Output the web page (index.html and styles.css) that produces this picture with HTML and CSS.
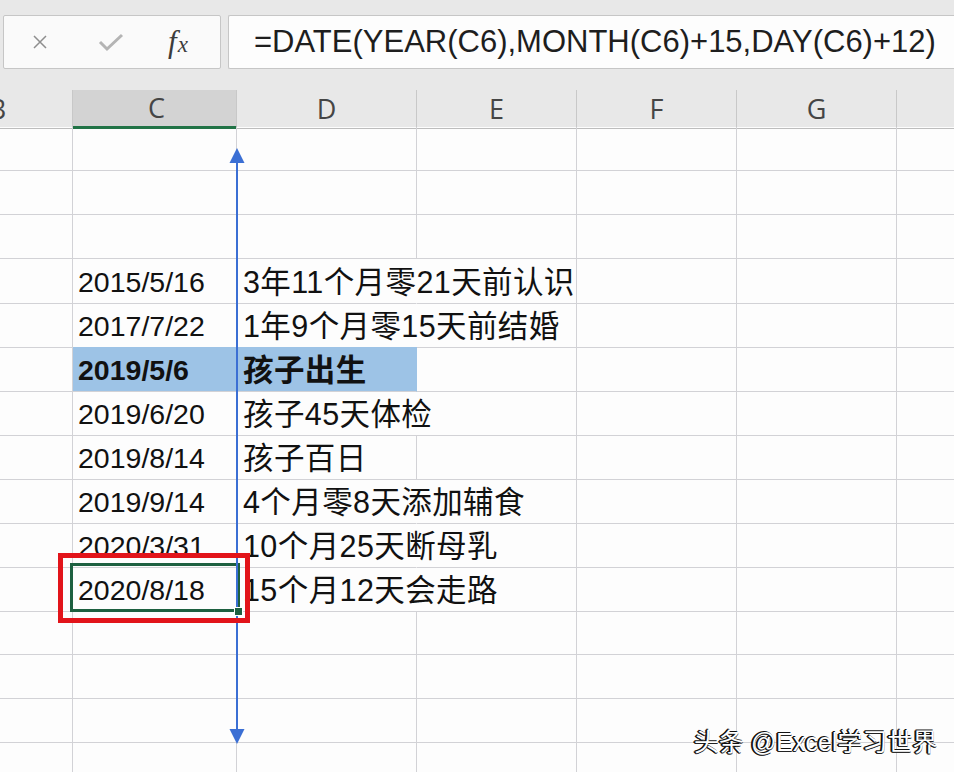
FILE: index.html
```html
<!DOCTYPE html>
<html>
<head>
  <meta charset="utf-8">
  <link rel="stylesheet" href="styles.css">
</head>
<body>
  <div class="toolbar">
    <div class="fx-buttons">
      <svg class="ico" width="16" height="16" viewBox="0 0 16 16"><path d="M2 2L14 14M14 2L2 14" stroke="#8e8e8e" stroke-width="1.5" fill="none"/></svg>
      <svg class="ico" width="26" height="20" viewBox="0 0 26 20"><path d="M2 10L9 17L24 3" stroke="#b4b4b4" stroke-width="3" fill="none"/></svg>
      <span class="fx">f<small>x</small></span>
    </div>
    <div class="formula">=DATE(YEAR(C6),MONTH(C6)+15,DAY(C6)+12)</div>
  </div>

  <div class="sheet">
    <div class="row head">
      <div class="cell">B</div>
      <div class="cell sel">C</div>
      <div class="cell">D</div>
      <div class="cell">E</div>
      <div class="cell">F</div>
      <div class="cell">G</div>
      <div class="cell"></div>
    </div>

    <div class="row"><div class="cell"></div><div class="cell"></div><div class="cell"></div><div class="cell"></div><div class="cell"></div><div class="cell"></div><div class="cell"></div></div>
    <div class="row"><div class="cell"></div><div class="cell"></div><div class="cell"></div><div class="cell"></div><div class="cell"></div><div class="cell"></div><div class="cell"></div></div>
    <div class="row"><div class="cell"></div><div class="cell"></div><div class="cell"></div><div class="cell"></div><div class="cell"></div><div class="cell"></div><div class="cell"></div></div>

    <div class="row"><div class="cell"></div><div class="cell date">2015/5/16</div><div class="cell note spill">3年11个月零21天前认识</div><div class="cell"></div><div class="cell"></div><div class="cell"></div><div class="cell"></div></div>
    <div class="row"><div class="cell"></div><div class="cell date">2017/7/22</div><div class="cell note spill">1年9个月零15天前结婚</div><div class="cell"></div><div class="cell"></div><div class="cell"></div><div class="cell"></div></div>
    <div class="row"><div class="cell"></div><div class="cell date hl">2019/5/6</div><div class="cell note hl">孩子出生</div><div class="cell"></div><div class="cell"></div><div class="cell"></div><div class="cell"></div></div>
    <div class="row"><div class="cell"></div><div class="cell date">2019/6/20</div><div class="cell note spill">孩子45天体检</div><div class="cell"></div><div class="cell"></div><div class="cell"></div><div class="cell"></div></div>
    <div class="row"><div class="cell"></div><div class="cell date">2019/8/14</div><div class="cell note">孩子百日</div><div class="cell"></div><div class="cell"></div><div class="cell"></div><div class="cell"></div></div>
    <div class="row"><div class="cell"></div><div class="cell date">2019/9/14</div><div class="cell note spill">4个月零8天添加辅食</div><div class="cell"></div><div class="cell"></div><div class="cell"></div><div class="cell"></div></div>
    <div class="row"><div class="cell"></div><div class="cell date">2020/3/31</div><div class="cell note spill">10个月25天断母乳</div><div class="cell"></div><div class="cell"></div><div class="cell"></div><div class="cell"></div></div>
    <div class="row"><div class="cell"></div><div class="cell date active">2020/8/18</div><div class="cell note spill">15个月12天会走路</div><div class="cell"></div><div class="cell"></div><div class="cell"></div><div class="cell"></div></div>

    <div class="row"><div class="cell"></div><div class="cell"></div><div class="cell"></div><div class="cell"></div><div class="cell"></div><div class="cell"></div><div class="cell"></div></div>
    <div class="row"><div class="cell"></div><div class="cell"></div><div class="cell"></div><div class="cell"></div><div class="cell"></div><div class="cell"></div><div class="cell"></div></div>
    <div class="row"><div class="cell"></div><div class="cell"></div><div class="cell"></div><div class="cell"></div><div class="cell"></div><div class="cell"></div><div class="cell"></div></div>
    <div class="row"><div class="cell"></div><div class="cell"></div><div class="cell"></div><div class="cell"></div><div class="cell"></div><div class="cell"></div><div class="cell"></div></div>

    <!-- annotations drawn over the grid -->
    <svg class="arrow" width="16" height="600" viewBox="0 0 16 600">
      <line x1="8" y1="16" x2="8" y2="584" stroke="#3b6fd4" stroke-width="2"/>
      <polygon points="8,2 15.5,17 0.5,17" fill="#3b6fd4"/>
      <polygon points="0.5,583 15.5,583 8,598" fill="#3b6fd4"/>
    </svg>
    <div class="redbox"></div>
    <div class="watermark">头条 @Excel学习世界</div>
  </div>
</body>
</html>
```

FILE: styles.css
```css
body {
  margin: 0;
  background: #fdfdfd;
  font-family: "Liberation Sans", "Noto Sans CJK SC", sans-serif;
  overflow: hidden;
}

.toolbar {
  height: 90px;
  background: #e8e8e8;
  display: flex;
  align-items: flex-start;
  padding: 15px 0 0 3px;
  box-sizing: border-box;
  gap: 7px;
}
.fx-buttons {
  width: 218px;
  height: 54px;
  box-sizing: border-box;
  background: #fafafa;
  border: 1px solid #c6c6c6;
  border-radius: 2px;
  display: flex;
  align-items: center;
  padding-left: 28px;
}
.fx-buttons .ico + .ico {
  margin-left: 50px;
}
.fx {
  margin-left: 44px;
  font-family: "Liberation Serif", serif;
  font-style: italic;
  font-size: 31px;
  color: #3c3c3c;
  letter-spacing: 1px;
}
.fx small {
  font-size: 23px;
}
.formula {
  flex: 1;
  height: 54px;
  box-sizing: border-box;
  background: #fdfdfd;
  border: 1px solid #c6c6c6;
  border-right: none;
  border-radius: 2px 0 0 2px;
  padding-left: 25px;
  font-size: 31px;
  line-height: 52px;
  color: #1e1e1e;
  white-space: nowrap;
}

.sheet {
  position: relative;
  overflow: hidden;
  height: 682px;
}
.row {
  display: grid;
  grid-template-columns: 150px 164px 180px 160px 160px 160px 160px;
  margin-left: -77px;
  height: 44px;
}
.cell {
  box-sizing: border-box;
  border-right: 1px solid #d2d2d6;
  border-bottom: 1px solid #d2d2d6;
  padding: 3px 0 0 5px;
  line-height: 41px;
  font-size: 28.5px;
  color: #111;
  white-space: nowrap;
}
.row.head {
  height: 37px;
  background: #e8e8e8;
}
.head .cell {
  padding: 0;
  text-align: center;
  font-family: "Open Sans", sans-serif;
  font-size: 27px;
  line-height: 38px;
  color: #454545;
  border-right-color: #c8c8c8;
  border-bottom-color: #bdbdbd;
}
.head .cell.sel {
  background: #d3d3d3;
  border-bottom: 3px solid #217346;
  line-height: 36px;
  padding-left: 4px;
}
.note {
  font-size: 30.5px;
  letter-spacing: 0.4px;
  padding-left: 6px;
}
.spill {
  border-right-color: transparent;
}
.hl {
  background: #9dc3e6;
  font-weight: bold;
  border-right-color: #9dc3e6;
}
.active {
  position: relative;
}
.active::after {
  content: "";
  position: absolute;
  left: -3px;
  top: -4px;
  right: -4px;
  bottom: -1px;
  border: 3px solid #1d6040;
}
.active::before {
  content: "";
  position: absolute;
  right: -7px;
  bottom: -5px;
  width: 7px;
  height: 7px;
  background: #1d6040;
  border: 1px solid #fff;
  z-index: 1;
}

.arrow {
  position: absolute;
  left: 229px;
  top: 56px;
}
.redbox {
  position: absolute;
  left: 58px;
  top: 463px;
  width: 192px;
  height: 70px;
  box-sizing: border-box;
  border: 5px solid #e2141a;
}
.watermark {
  position: absolute;
  left: 694px;
  top: 632px;
  font-size: 25px;
  color: #fff;
  text-shadow: -1px -1px 0 #111, -2px 0 0 #111, -1px 1px 0 #222, 0 1px 0 #333;
  white-space: nowrap;
}
```
